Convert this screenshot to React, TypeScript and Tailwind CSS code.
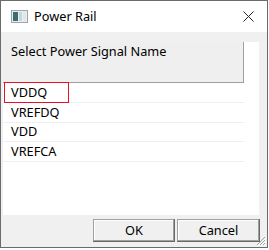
import { FC } from "react"

const font = { fontFamily: '"Noto Sans", "Open Sans", sans-serif' }

const items = [
  { name: "VDDQ", h: "h-[20px]" },
  { name: "VREFDQ", h: "h-[20px]" },
  { name: "VDD", h: "h-[19px]" },
  { name: "VREFCA", h: "h-[20px]" },
]

const AppIcon: FC = () => (
  <svg width="17" height="13" viewBox="0 0 17 13">
    <rect x="0.5" y="0.5" width="16" height="12" fill="#e9eef2" stroke="#9aa6ae" />
    <rect x="2" y="2" width="5" height="9" fill="#3d6f6a" />
    <rect x="8" y="2" width="3" height="9" fill="#c9d6dc" />
    <rect x="12" y="2" width="3" height="9" fill="#dfe7ea" />
  </svg>
)

const Button: FC<{ label: string; width: string }> = ({ label, width }) => (
  <button
    className={`${width} h-[23px] bg-[#f0f0f0] text-[12.75px] text-black flex items-center justify-center shadow-[inset_-1px_-1px_#696969,inset_1px_1px_#a0a0a0,inset_-2px_-2px_#a0a0a0,inset_2px_2px_#ffffff]`}
  >
    {label}
  </button>
)

export default function App() {
  return (
    <div className="w-[269px] h-[250px] bg-white" style={font}>
      <div className="w-[268px] h-[248px] border border-[#6b6b6b] flex flex-col bg-white">
        <div className="h-[31px] flex items-center bg-white">
          <span className="ml-[10px] flex"><AppIcon /></span>
          <span className="ml-[6px] text-[12.75px] text-black">Power Rail</span>
          <svg className="ml-auto mr-[13px]" width="11" height="11" viewBox="0 0 11 11">
            <path d="M0.5 0.5L10.5 10.5M10.5 0.5L0.5 10.5" stroke="#222" strokeWidth="1" />
          </svg>
        </div>
        <div className="flex-1 bg-[#f0f0f0] flex flex-col relative">
          <div className="ml-[2px] mt-[10px] w-[256px] h-[173px] bg-white flex flex-col">
            <div className="w-[241px] h-[41px] bg-[#efefef] border-r border-b border-[#a0a0a0] pl-[8px] pt-[1px] text-[12.75px] text-black leading-[16px]">
              Select Power Signal Name
            </div>
            {items.map((it, i) => (
              <div
                key={it.name}
                className={`w-[241px] ${it.h} border-b border-[#efefef] flex items-center text-[12.75px] text-black`}
              >
                {i === 0 ? (
                  <span className="ml-[1px] w-[65px] h-[21px] border border-[#e81123] flex items-center pl-[6px]">
                    {it.name}
                  </span>
                ) : (
                  <span className="pl-[8px]">{it.name}</span>
                )}
              </div>
            ))}
          </div>
          <div className="mt-[4px] flex justify-end gap-[2px] pr-[7px]">
            <Button label="OK" width="w-[82px]" />
            <Button label="Cancel" width="w-[83px]" />
          </div>
          <svg className="absolute right-[1px] bottom-[1px]" width="10" height="10" viewBox="0 0 10 10">
            <path d="M9 1L1 9M9 4L4 9M9 7L7 9" stroke="#a0a0a0" strokeWidth="1" />
            <path d="M10 2L2 10M10 5L5 10M10 8L8 10" stroke="#ffffff" strokeWidth="1" />
          </svg>
        </div>
      </div>
    </div>
  )
}
